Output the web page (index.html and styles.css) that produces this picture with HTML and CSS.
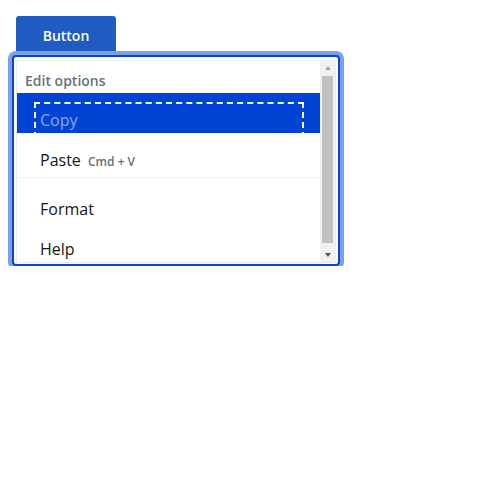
FILE: index.html
```html
<!DOCTYPE html>
<html>
<head>
<meta charset="utf-8">
<link rel="stylesheet" href="styles.css">
</head>
<body>
<div class="page">
  <button class="trigger">Button</button>
  <div class="menu">
    <div class="list">
      <div class="content">
        <div class="header">Edit options</div>
        <div class="item active"><div class="focus">Copy</div></div>
        <div class="item paste">Paste <span class="shortcut">Cmd + V</span></div>
        <div class="group">
          <div class="item">Format</div>
          <div class="item last">Help</div>
        </div>
      </div>
      <div class="scrollbar" aria-hidden="true">
        <div class="sb-btn"><span class="tri up"></span></div>
        <div class="sb-track"><div class="sb-thumb"></div></div>
        <div class="sb-btn"><span class="tri down"></span></div>
      </div>
    </div>
  </div>
</div>
</body>
</html>
```
FILE: styles.css
```css
* { box-sizing: border-box; }
html, body { margin: 0; padding: 0; background: #fff; }
body { font-family: "Open Sans", "Noto Sans", sans-serif; color: #161616; }
.page { padding: 16px 0 0 12px; }
.trigger {
  display: block;
  margin: 0 0 0 4px;
  width: 100px;
  height: 36px;
  border: 0;
  border-radius: 3px 3px 0 0;
  background: #1f5bc1;
  color: #fff;
  font-family: "Open Sans", sans-serif;
  font-weight: 600;
  font-size: 14px;
  padding: 3px 0 0;
}
.menu {
  margin-top: 3px;
  width: 328px;
  border: 2px solid #0646d6;
  border-radius: 4px;
  box-shadow: 0 0 0 4px #7ea0e7;
  padding: 3px 2px 1px 2px;
  background: #fff;
}
.list {
  display: flex;
  height: 203px;
  border: 1px solid #ececec;
}
.content {
  flex: 1;
  min-width: 0;
  overflow: hidden;
}
.scrollbar {
  flex: none;
  width: 15px;
  background: #f1f1f1;
  display: flex;
  flex-direction: column;
}
.sb-btn {
  flex: none;
  height: 15px;
  display: flex;
  align-items: center;
  justify-content: center;
}
.tri {
  width: 0;
  height: 0;
  border-left: 3.5px solid transparent;
  border-right: 3.5px solid transparent;
}
.tri.up { border-bottom: 4px solid #a3a3a3; margin-bottom: 1px; }
.tri.down { border-top: 4px solid #505050; margin-top: 1px; }
.sb-track { flex: 1; padding: 0 2px; }
.sb-thumb { height: 167px; background: #c1c1c1; }
.header {
  padding: 10px 8px 2px;
  line-height: 20px;
  font-size: 14px;
  font-weight: 600;
  color: #6c7079;
}
.item {
  font-size: 16px;
  line-height: 24px;
  padding: 8px 8px 8px 23px;
}
.item.active {
  height: 40px;
  padding: 11px 18px 0 19px;
  background: #0044d6;
}
.focus {
  height: 32px;
  padding: 4px 0 0 4px;
  color: #8ea6df;
  outline: 2px dashed #fff;
}
.item.paste {
  padding: 15px 8px 3px 23px;
  border-bottom: 1px solid #efefef;
}
.shortcut {
  margin-left: 3px;
  font-size: 12px;
  font-weight: 600;
  color: #6b6e75;
}
.group { padding-top: 11px; }
.item.last { padding-bottom: 5px; }
```
